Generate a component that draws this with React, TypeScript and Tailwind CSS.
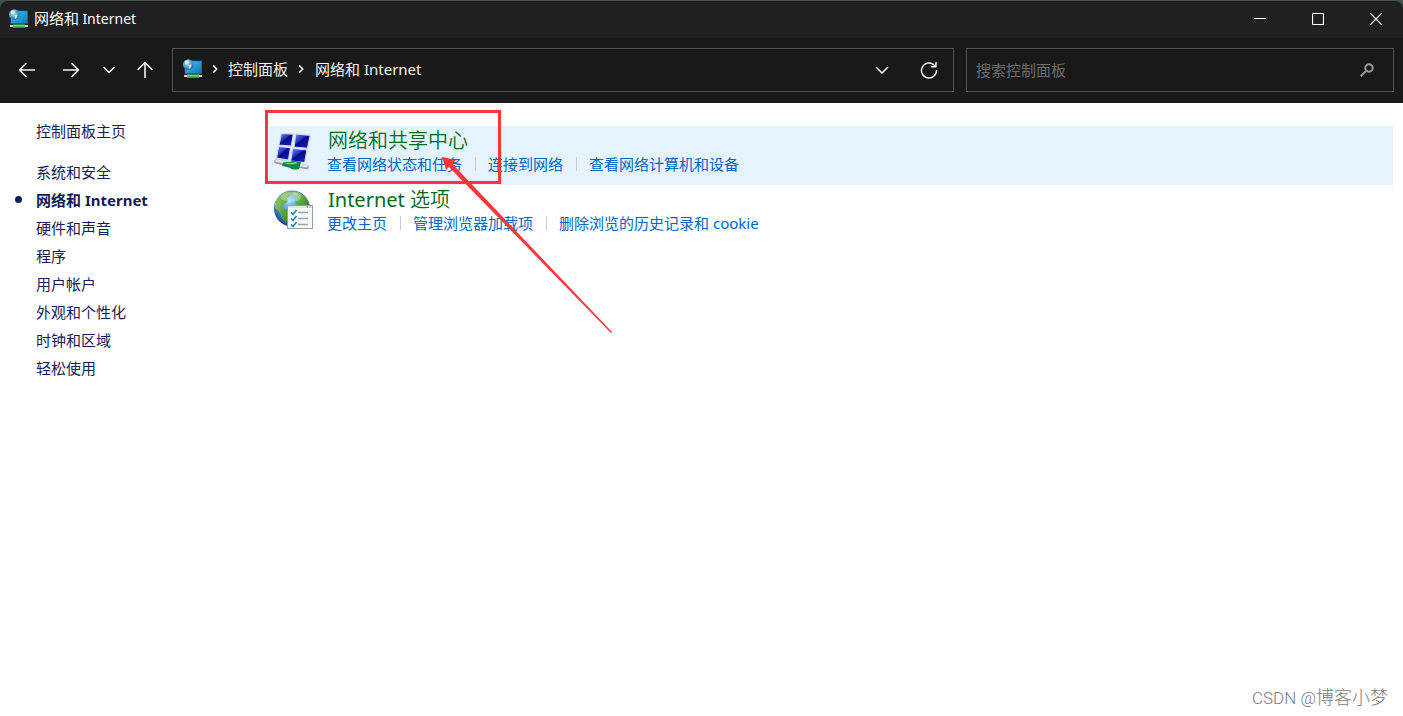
import React, { useId } from 'react';

const categories = ['系统和安全', '网络和 Internet', '硬件和声音', '程序', '用户帐户', '外观和个性化', '时钟和区域', '轻松使用'];

function NetworkIcon() {
  const id = useId();
  return (
    <svg width="20" height="20" viewBox="0 0 20 20" className="shrink-0" aria-hidden="true">
      <defs>
        <linearGradient id={`${id}s`} x1="0" y1="0" x2="1" y2="1">
          <stop offset="0" stopColor="#2fd0ee" />
          <stop offset="1" stopColor="#0f74c4" />
        </linearGradient>
        <radialGradient id={`${id}g`} cx="0.4" cy="0.35" r="0.7">
          <stop offset="0" stopColor="#b9e2f5" />
          <stop offset="0.5" stopColor="#5fa6cc" />
          <stop offset="1" stopColor="#27648f" />
        </radialGradient>
      </defs>
      <rect x="1.500" y="1.500" width="17.500" height="13.500" fill="#0b5a9c" />
      <rect x="2.200" y="2.200" width="16" height="12" fill={`url(#${id}s)`} />
      <circle cx="5.300" cy="5.500" r="5.300" fill={`url(#${id}g)`} />
      <path d="M2 2.500l3-1.500 1 2-2 2.500-2-.5zM5.500 6l3-.5-.5 3-2 1.500z" fill="#e0f4fb" opacity="0.85" />
      <rect x="1" y="16" width="18" height="2" fill="#d3d6d8" />
      <rect x="4" y="15.500" width="12" height="3.500" fill="#54e268" />
      <rect x="4" y="17.500" width="12" height="1.500" fill="#1fa03d" />
    </svg>
  );
}

function SharingCenterIcon() {
  return (
    <svg width="40" height="40" viewBox="0 0 40 40" className="mt-px" aria-hidden="true">
      <defs>
        <linearGradient id="screen" x1="0" y1="0" x2="0.9" y2="1">
          <stop offset="0" stopColor="#6f86ee" />
          <stop offset="0.4" stopColor="#2638c4" />
          <stop offset="0.5" stopColor="#070a86" />
          <stop offset="1" stopColor="#1a24cc" />
        </linearGradient>
      </defs>
      <g fill="url(#screen)" stroke="#cfd8e6" strokeWidth="1.200">
        <path d="M7.300 2.500l12 .6-2 12-12.300-1.100z" />
        <path d="M21.700 3l14.500 1.300-2.700 13-13.500-1.300z" />
        <path d="M4.500 15.500l12 1.200-2 12.500-12-2z" />
        <path d="M18.500 17.300l14.500 1.700-2.300 12.700-14-1.700z" />
      </g>
      <path d="M2.500 30.500l30 5.500" stroke="#949ba1" strokeWidth="4.500" strokeLinecap="round" />
      <path d="M2.500 29.800l30 5.500" stroke="#e4e8ea" strokeWidth="2.400" strokeLinecap="round" />
      <path d="M9 31.500c4-1 7 .5 10-2l8 1.500-2 7c-4 1.500-8 0-10-1.500l-7-1.500z" fill="#12893c" />
      <path d="M10 31.800c4-.5 8 1 11-.8l3 .8c-4 2-9 2.200-14 0z" fill="#6bdc8b" />
    </svg>
  );
}

function InternetOptionsIcon() {
  return (
    <svg width="40" height="40" viewBox="0 0 40 40" className="mt-px" aria-hidden="true">
      <defs>
        <radialGradient id="ocean" cx="0.42" cy="0.3" r="0.7">
          <stop offset="0" stopColor="#a8daf4" />
          <stop offset="0.5" stopColor="#3a86cb" />
          <stop offset="1" stopColor="#123f87" />
        </radialGradient>
        <linearGradient id="land" x1="0" y1="0" x2="1" y2="1">
          <stop offset="0" stopColor="#9ed269" />
          <stop offset="1" stopColor="#2f8026" />
        </linearGradient>
      </defs>
      <circle cx="18" cy="18.500" r="18" fill="url(#ocean)" />
      <path d="M3 9C6 5 10 2 15 1l3 2-2 3-3 2 1 3-4 3-2 4 5 2 3 4-2 4-2 5-4-4-2-6-5-5c-.5-3 0-6 2-9z" fill="url(#land)" />
      <path d="M20 1.500c6 .5 11 4 14 10l1 5-4-1-3 2-5-2-2-4 3-2-2-3-3-2z" fill="url(#land)" />
      <ellipse cx="17" cy="7" rx="10" ry="5" fill="#fff" opacity="0.3" />
      <rect x="13.500" y="15.500" width="25" height="23" fill="#f7f9fa" stroke="#9a9fa3" />
      <rect x="14" y="16" width="24" height="2" fill="#dfe4e8" />
      <path d="M33 17h1M35.500 17h1" stroke="#52616e" />
      <path d="M24 22.500h10M24 28.500h10M24 34.500h10" stroke="#98a5ae" strokeWidth="1.300" />
      <path d="M17 22.500l2 2 3.500-4.500M17 28.500l2 2 3.500-4.500M17 34.500l2 2 3.500-4.500" fill="none" stroke="#2586c9" strokeWidth="1.700" />
    </svg>
  );
}

const tasks = [
  {
    id: 'sharing',
    title: '网络和共享中心',
    icon: <SharingCenterIcon />,
    active: true,
    links: ['查看网络状态和任务', '连接到网络', '查看网络计算机和设备'],
  },
  {
    id: 'internet',
    title: <><span className="font-normal">Internet</span> 选项</>,
    icon: <InternetOptionsIcon />,
    active: false,
    links: ['更改主页', '管理浏览器加载项', '删除浏览的历史记录和 cookie'],
  },
];

function Glyph({ d, size = 18, width = 1.6 }: { d: string; size?: number; width?: number }) {
  return (
    <svg width={size} height={size} viewBox="0 0 18 18" fill="none" stroke="currentColor" strokeWidth={width} strokeLinecap="round" strokeLinejoin="round" aria-hidden="true">
      <path d={d} />
    </svg>
  );
}

function TitleBar() {
  return (
    <div className="bg-[#4b5052]">
      <header className="flex h-[38px] items-center justify-between rounded-t-lg border-t border-[#4b5052] bg-[#202020] pl-[9px] text-white">
        <div className="flex items-center gap-[5px] pb-[2px]">
          <NetworkIcon />
          <h1 className="font-['Noto_Sans_CJK_SC',sans-serif] text-[15px] leading-5">
            网络和 <span className="font-['Noto_Sans',sans-serif] text-[14px]">Internet</span>
          </h1>
        </div>
        <div className="flex h-full gap-1 pb-[2px]">
          <button aria-label="最小化" className="flex w-[54px] items-center justify-center">
            <svg width="12" height="12" stroke="currentColor" aria-hidden="true"><path d="M0 5.500h12" /></svg>
          </button>
          <button aria-label="最大化" className="flex w-[54px] items-center justify-center">
            <svg width="12" height="12" fill="none" stroke="currentColor" aria-hidden="true"><rect x="0.5" y="0.5" width="11" height="11" rx="1" strokeWidth="1.200" /></svg>
          </button>
          <button aria-label="关闭" className="flex w-[54px] items-center justify-center">
            <svg width="12" height="12" stroke="currentColor" strokeWidth="1.200" aria-hidden="true"><path d="M0 0l12 12M12 0L0 12" /></svg>
          </button>
        </div>
      </header>
    </div>
  );
}

function NavBar() {
  return (
    <nav className="flex h-[65px] items-center bg-[#191919] pr-[9px] pb-[1px] pl-[5px] text-[#f3f3f3]">
      <button aria-label="后退" className="flex w-11 justify-center"><Glyph d="M16.500 9H1.500M8 2.500L1.500 9 8 15.500" /></button>
      <button aria-label="前进" className="flex w-11 justify-center"><Glyph d="M1.500 9h15M10 2.500l6.500 6.500-6.500 6.500" /></button>
      <button aria-label="最近位置" className="flex w-8 justify-center"><Glyph d="M4 6.500l5 5 5-5" /></button>
      <button aria-label="上移" className="flex w-10 justify-center"><Glyph d="M9 16.500v-15M2 8.500l7-7 7 7" /></button>
      <div className="ml-[7px] flex h-11 flex-1 items-center border border-[#535353] pr-[15px] pb-[2px] pl-[10px] text-[15px] leading-5">
        <NetworkIcon />
        <span className="flex w-[25px] justify-center"><Glyph d="M6 5l4 4-4 4" size={14} width={2} /></span>
        <a href="#" className="whitespace-nowrap">控制面板</a>
        <span className="flex w-[27px] justify-center"><Glyph d="M6 5l4 4-4 4" size={14} width={2} /></span>
        <a href="#" className="whitespace-nowrap">网络和 Internet</a>
        <button aria-label="历史记录" className="mt-[2px] mr-[29px] ml-auto"><Glyph d="M3.500 6.500L9 12l5.500-5.500" /></button>
        <button aria-label="刷新" className="mt-[2px]"><Glyph d="M16.500 9.500A7.500 7.500 0 1 1 13.800 3.700L16 5.500M16 1.500v4.300h-4.300" width={1.4} /></button>
      </div>
      <div className="ml-3 flex h-11 w-[428px] items-center border border-[#535353] pr-[19px] pl-[9px]">
        <input type="search" aria-label="搜索控制面板" placeholder="搜索控制面板" className="min-w-0 flex-1 bg-transparent text-[15px] leading-5 outline-none placeholder:text-[#6d6d6d]" />
        <svg width="14" height="14" fill="none" stroke="#9a9a9a" strokeWidth="2" aria-hidden="true">
          <circle cx="9" cy="5" r="3.700" />
          <path d="M6.300 7.700L0.700 13.300" />
        </svg>
      </div>
    </nav>
  );
}

export default function App() {
  return (
    <div className="flex min-h-screen flex-col bg-white font-['Noto_Sans','Noto_Sans_CJK_SC',sans-serif]" lang="zh-CN">
      <TitleBar />
      <NavBar />
      <div className="relative flex flex-1">
        <aside className="w-[269px] shrink-0 pt-[14px] pl-9 text-[15px] leading-7 text-[#151c55]">
          <a href="#">控制面板主页</a>
          <ul className="mt-[13px]">
            {categories.map((name) =>
              name === '网络和 Internet' ? (
                <li key={name} className="relative font-bold">
                  <span className="absolute top-[10px] -left-[21px] size-[7px] rounded-full bg-[#151c55]" />
                  {name}
                </li>
              ) : (
                <li key={name}><a href="#">{name}</a></li>
              )
            )}
          </ul>
        </aside>

        <main className="flex-1 pt-[23px] pr-[10px]">
          {tasks.map((task) => (
            <section key={task.id} className={`flex h-[59px] pt-1 pl-[5px] ${task.active ? 'bg-[#e5f3ff]' : ''}`}>
              {task.icon}
              <div className="ml-[13px]">
                <h2 className="pl-px text-[20px] leading-[22px] font-[350] text-[#006c1b]"><a href="#">{task.title}</a></h2>
                <ul className="mt-[2px] flex text-[15px] leading-5 text-[#0066cc]">
                  {task.links.map((link, i) => (
                    <li key={link} className="flex items-center">
                      {i > 0 && <span className="mr-3 ml-[13px] h-[14px] w-px bg-[#cccccc]" />}
                      <a href="#">{link}</a>
                    </li>
                  ))}
                </ul>
              </div>
            </section>
          ))}
        </main>

        {/* red marker around the first entry */}
        <div className="pointer-events-none absolute top-[7px] left-[265px] h-[74px] w-[236px] border-3 border-[#fd3737]" />
        <svg width="172" height="178" className="pointer-events-none absolute top-[53px] left-[441px]" aria-hidden="true">
          <path d="M1 1l14 3-4 3.500 160 168.500-1 1L8 11l-3 3z" fill="#fd3737" />
        </svg>

        <p className="absolute right-[15px] bottom-[6px] font-['Roboto','Noto_Sans_CJK_SC',sans-serif] text-[18px] leading-6 font-light text-[#7c7c7c]">
          <span className="text-[17px]">CSDN @</span>博客小梦
        </p>
      </div>
    </div>
  );
}
